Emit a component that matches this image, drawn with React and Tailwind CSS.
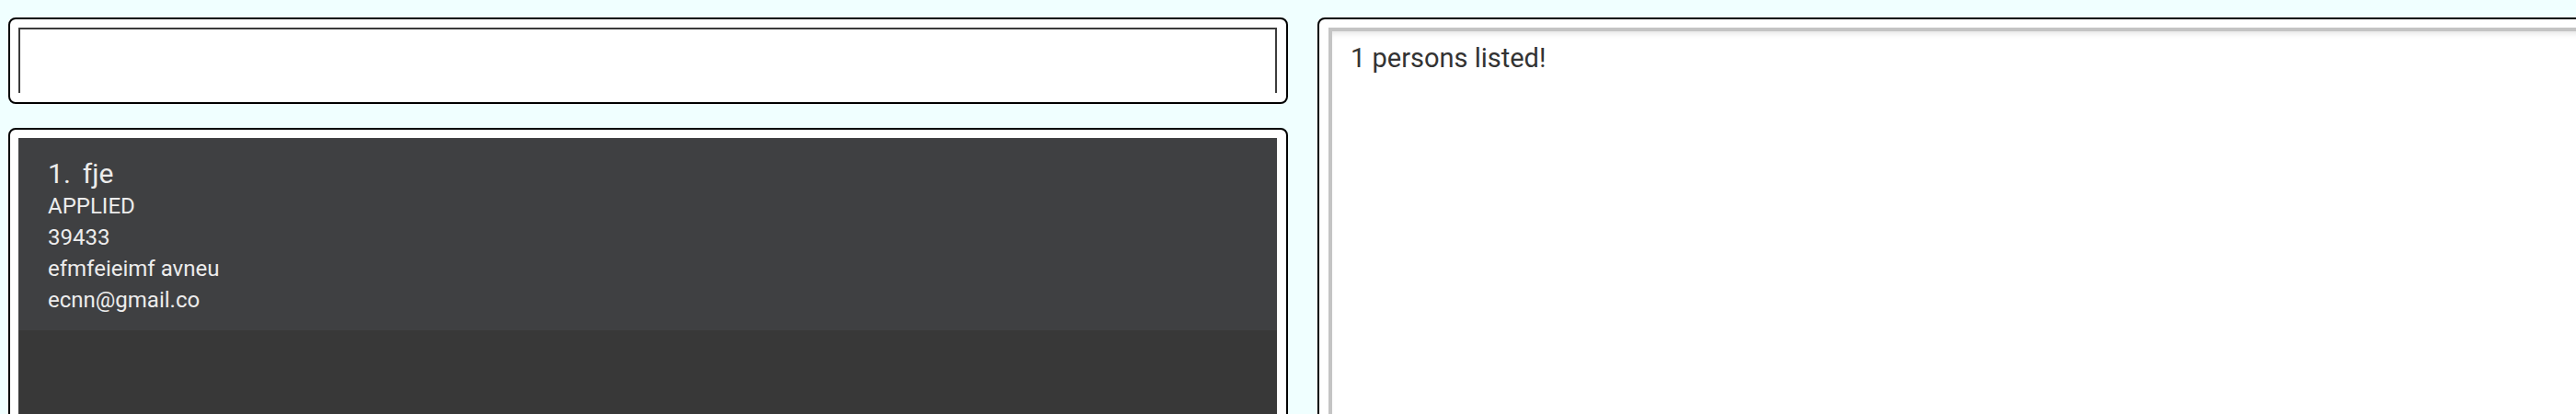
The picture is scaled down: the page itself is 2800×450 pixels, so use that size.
import React from 'react';

// Kartu satu orang dalam daftar
const PersonCard = ({ index, name, status, phone, address, email }) => (
  <div className="bg-[#3f4042] h-[209px] pl-[32px] pt-[21px] text-[#ececec]">
    <div className="flex text-[30px] leading-[36px]">
      <span>{index}.</span>
      <span className="ml-[13px]">{name}</span>
    </div>
    <div className="text-[24px] leading-[34px]">
      <div>{status}</div>
      <div>{phone}</div>
      <div>{address}</div>
      <div>{email}</div>
    </div>
  </div>
);

export default function App() {
  const persons = [
    { name: 'fje', status: 'APPLIED', phone: '39433', address: 'efmfeieimf avneu', email: 'ecnn@gmail.co' },
  ];

  return (
    <div className="h-[450px] overflow-hidden bg-[#f0ffff] flex items-start gap-[32px] pl-[9px] pt-[19px] font-['Roboto',sans-serif]">
      <div className="w-[1391px] shrink-0 flex flex-col gap-[26px]">
        {/* kotak input perintah */}
        <div className="h-[94px] shrink-0 rounded-[8px] border-2 border-black bg-white pt-[9px] pl-[9px] pr-[10px]">
          <div className="h-[71px] border-t-2 border-x-2 border-[#3c3c3c]" />
        </div>

        {/* daftar orang */}
        <div className="h-[420px] shrink-0 rounded-[8px] border-2 border-black bg-white pt-[9px] pl-[9px] pr-[10px]">
          <div className="h-full bg-[#383838]">
            {persons.map((p, i) => (
              <PersonCard key={i} index={i + 1} {...p} />
            ))}
          </div>
        </div>
      </div>

      {/* kotak hasil */}
      <div className="w-[1400px] shrink-0 h-[500px] rounded-[8px] border-2 border-black bg-white pt-[9px] pl-[10px]">
        <div className="h-full border-t-[4px] border-l-[4px] border-[#c4c4c4] shadow-[inset_0_6px_6px_-4px_rgba(0,0,0,0.12)] pl-[20px] pt-[11px]">
          <p className="text-[29px] leading-[36px] text-[#333333]">1 persons listed!</p>
        </div>
      </div>
    </div>
  );
}
